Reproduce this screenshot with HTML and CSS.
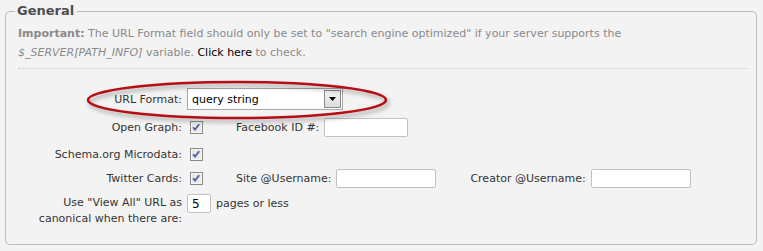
FILE: index.html
```html
<!DOCTYPE html>
<html lang="en">
<head>
<meta charset="UTF-8">
<title>SEO Settings</title>
<link rel="stylesheet" href="styles.css">
</head>
<body>
<fieldset class="panel">
  <legend>General</legend>
  <div class="note">
    <b>Important:</b> The URL Format field should only be set to "search engine optimized" if your server supports the
    <i>$_SERVER[PATH_INFO]</i> variable. <a href="#">Click here</a> to check.
  </div>

  <div class="form">
    <label class="lbl r1">URL Format:</label>
    <div class="val r1">
      <div class="select">
        <span class="select-text">query string</span>
        <span class="select-btn">
          <svg width="7" height="4" viewBox="0 0 7 4"><path d="M0 0h7L3.5 4z" fill="#000"/></svg>
        </span>
      </div>
    </div>

    <label class="lbl r2">Open Graph:</label>
    <div class="val r2">
      <span class="check"><svg width="13" height="13" viewBox="0 0 13 13"><rect x="0.5" y="0.5" width="12" height="12" fill="#dedede" stroke="#8a8a8a"/><rect x="1.5" y="1.5" width="10" height="10" fill="#e9e9e9" stroke="#f6f6f6"/><path d="M3 6.2l2 2.4 4.2-5.4" fill="none" stroke="#4b5c9c" stroke-width="1.7"/></svg></span>
      <span class="sub first">Facebook ID #:</span>
      <input class="text w84" type="text">
    </div>

    <label class="lbl r3">Schema.org Microdata:</label>
    <div class="val r3">
      <span class="check"><svg width="13" height="13" viewBox="0 0 13 13"><rect x="0.5" y="0.5" width="12" height="12" fill="#dedede" stroke="#8a8a8a"/><rect x="1.5" y="1.5" width="10" height="10" fill="#e9e9e9" stroke="#f6f6f6"/><path d="M3 6.2l2 2.4 4.2-5.4" fill="none" stroke="#4b5c9c" stroke-width="1.7"/></svg></span>
    </div>

    <label class="lbl r4">Twitter Cards:</label>
    <div class="val r4">
      <span class="check"><svg width="13" height="13" viewBox="0 0 13 13"><rect x="0.5" y="0.5" width="12" height="12" fill="#dedede" stroke="#8a8a8a"/><rect x="1.5" y="1.5" width="10" height="10" fill="#e9e9e9" stroke="#f6f6f6"/><path d="M3 6.2l2 2.4 4.2-5.4" fill="none" stroke="#4b5c9c" stroke-width="1.7"/></svg></span>
      <span class="sub first">Site @Username:</span>
      <input class="text w100" type="text">
      <span class="sub second">Creator @Username:</span>
      <input class="text w100" type="text">
    </div>

    <label class="lbl r5 two">Use "View All" URL as<br>canonical when there are:</label>
    <div class="val r5 top">
      <input class="text w24" type="text" value="5">
      <span class="sub">pages or less</span>
    </div>
  </div>

  <svg class="circle" width="310" height="50" viewBox="0 0 310 50">
    <ellipse cx="152" cy="21" rx="149" ry="18" fill="none" stroke="#b80d14" stroke-width="2.6"/>
  </svg>
</fieldset>
</body>
</html>
```

FILE: styles.css
```css
body {
  margin: 0;
  padding: 2px 6px 5px 5px;
  background: #f3f3f3;
  font-family: "DejaVu Sans", Verdana, sans-serif;
  font-size: 11px;
  color: #333;
}
.panel {
  position: relative;
  margin: 0;
  border: 1px solid #bcbcbc;
  border-radius: 5px;
  padding: 0 8px 17px 12px;
}
.panel legend {
  margin-left: -3px;
  padding: 0 3px 0 2px;
  font-size: 13px;
  font-weight: bold;
  line-height: 18px;
  color: #4e4e4e;
}
.note {
  margin-top: 4px;
  padding-bottom: 6px;
  border-bottom: 1px dotted #c6c6c6;
  line-height: 19px;
  color: #8a8a8a;
}
.note a {
  color: #000;
  text-decoration: none;
}
.form {
  display: grid;
  grid-template-columns: 164px auto;
  grid-template-rows: 26px 30px 24px 24px auto;
  column-gap: 5px;
  margin-top: 17px;
}
.lbl {
  display: flex;
  align-items: center;
  justify-content: flex-end;
  text-align: right;
  white-space: nowrap;
}
.lbl.two {
  align-items: flex-start;
  padding-top: 5px;
  line-height: 16px;
}
.val {
  display: flex;
  align-items: center;
}
.val.top {
  align-items: flex-start;
  padding-top: 4px;
}
.val.top .sub {
  margin-left: 5px;
  line-height: 19px;
}
.select {
  display: flex;
  align-items: stretch;
  width: 156px;
  height: 22px;
  box-sizing: border-box;
  border: 1px solid #a7a7a7;
  background: #fff;
}
.select-text {
  flex: 1;
  display: flex;
  align-items: center;
  padding-left: 4px;
  font-size: 11px;
  color: #000;
}
.select-btn {
  display: flex;
  align-items: center;
  justify-content: center;
  width: 15px;
  margin: 1px;
  border: 1px solid #8c8c8c;
  background: linear-gradient(#f4f4f4, #dcdcdc);
}
.check {
  display: flex;
  margin-left: 3px;
}
.sub {
  white-space: nowrap;
  margin-right: 5px;
}
.sub.first {
  margin-left: 33px;
}
.sub.second {
  margin-left: 34px;
}
.text {
  height: 19px;
  box-sizing: border-box;
  border: 1px solid #c2c2c2;
  border-radius: 2px;
  background: #fff;
  padding: 0 4px;
  font-family: inherit;
  font-size: 12px;
  color: #000;
  margin: 0;
}
.w84 { width: 84px; }
.w100 { width: 100px; }
.w24 { width: 24px; }
.circle {
  position: absolute;
  left: 79px;
  top: 59px;
  overflow: visible;
  filter: drop-shadow(2px 3px 2px rgba(0, 0, 0, 0.35));
  pointer-events: none;
}
```
